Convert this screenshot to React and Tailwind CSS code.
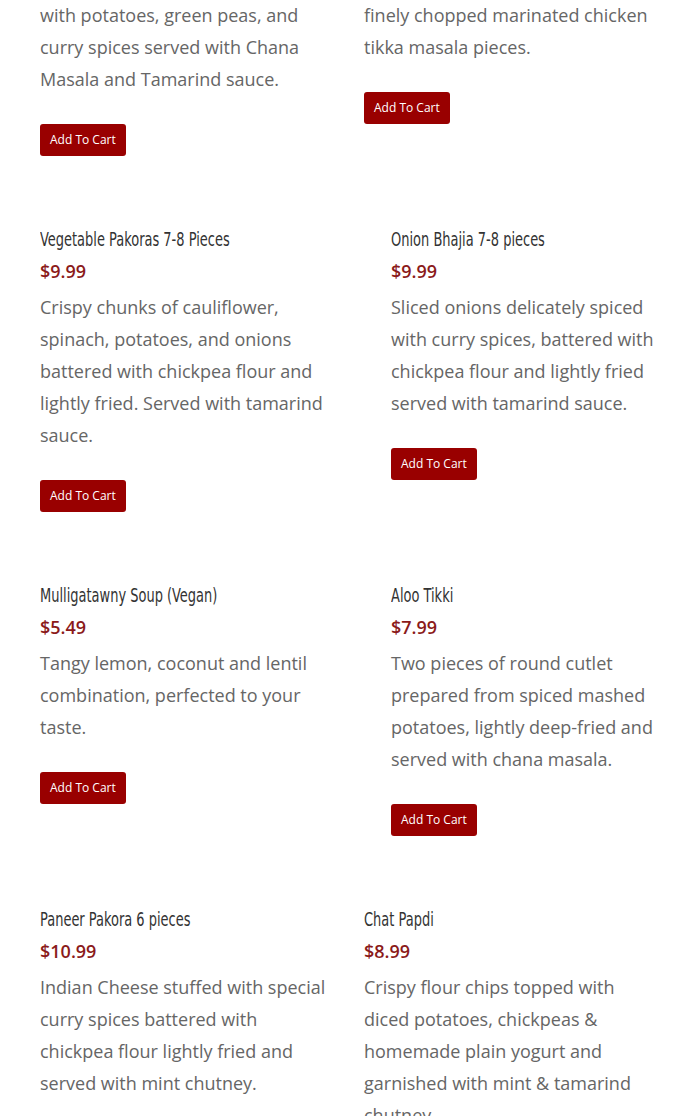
import React from 'react';

const rows = [
  {
    wide: true,
    items: [
      {
        desc: 'with potatoes, green peas, and curry spices served with Chana Masala and Tamarind sauce.',
      },
      {
        desc: 'finely chopped marinated chicken tikka masala pieces.',
      },
    ],
  },
  {
    wide: false,
    items: [
      {
        title: 'Vegetable Pakoras 7-8 Pieces',
        price: '$9.99',
        desc: 'Crispy chunks of cauliflower, spinach, potatoes, and onions battered with chickpea flour and lightly fried. Served with tamarind sauce.',
      },
      {
        title: 'Onion Bhajia 7-8 pieces',
        price: '$9.99',
        desc: 'Sliced onions delicately spiced with curry spices, battered with chickpea flour and lightly fried served with tamarind sauce.',
      },
    ],
  },
  {
    wide: false,
    items: [
      {
        title: 'Mulligatawny Soup (Vegan)',
        price: '$5.49',
        desc: 'Tangy lemon, coconut and lentil combination, perfected to your taste.',
      },
      {
        title: 'Aloo Tikki',
        price: '$7.99',
        desc: 'Two pieces of round cutlet prepared from spiced mashed potatoes, lightly deep-fried and served with chana masala.',
      },
    ],
  },
  {
    wide: true,
    items: [
      {
        title: 'Paneer Pakora 6 pieces',
        price: '$10.99',
        desc: 'Indian Cheese stuffed with special curry spices battered with chickpea flour lightly fried and served with mint chutney.',
      },
      {
        title: 'Chat Papdi',
        price: '$8.99',
        desc: 'Crispy flour chips topped with diced potatoes, chickpeas & homemade plain yogurt and garnished with mint & tamarind chutney.',
      },
    ],
  },
];

function MenuItem({ item }) {
  return (
    <div>
      {item.title && (
        <h3 className="h-8 leading-[32px] text-[#333333] whitespace-nowrap">
          <span
            className="inline-block origin-left scale-x-[0.76] text-[19px] font-normal"
            style={{ fontFamily: '"DejaVu Sans", sans-serif', fontStretch: 'condensed' }}
          >
            {item.title}
          </span>
        </h3>
      )}
      {item.price && (
        <p className="text-[18px] leading-[32px] font-semibold text-[#8b1a1a] mb-1">{item.price}</p>
      )}
      <p className="text-[18px] leading-[32px] text-[#666666] mb-[29px]">{item.desc}</p>
      <button className="h-8 px-[10px] rounded-[3px] bg-[#990000] text-white text-[12px] leading-none">
        Add To Cart
      </button>
    </div>
  );
}

export default function App() {
  return (
    <div
      className="bg-white min-h-screen pl-10 pr-[30px] -mt-px flex flex-col gap-[67px]"
      style={{ fontFamily: '"Open Sans", sans-serif' }}
    >
      {rows.map((row, i) => (
        <div
          key={i}
          className={row.wide ? 'grid grid-cols-[294px_1fr] gap-x-[30px] items-start' : 'grid grid-cols-[294px_1fr] gap-x-[57px] items-start'}
        >
          {row.items.map((item, j) => (
            <MenuItem key={j} item={item} />
          ))}
        </div>
      ))}
    </div>
  );
}
